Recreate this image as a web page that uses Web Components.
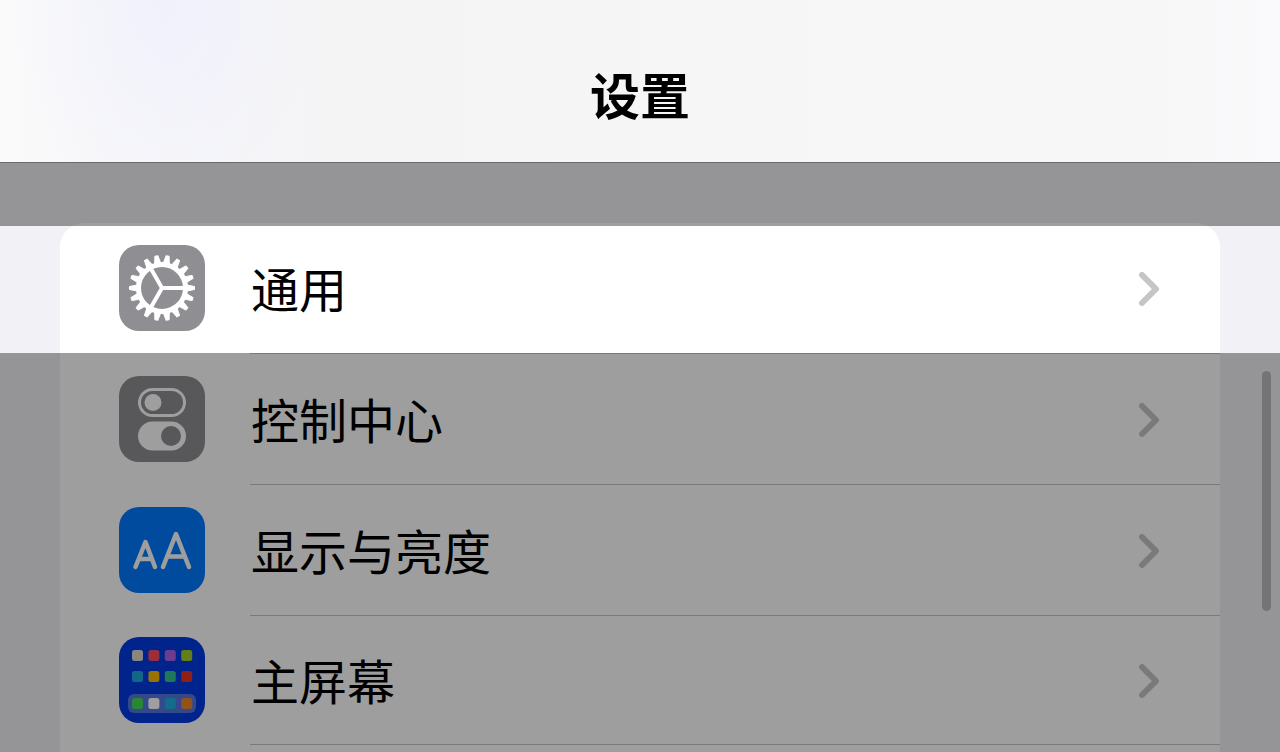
<!DOCTYPE html>
<html lang="zh-CN">
<head>
<meta charset="utf-8">
<title>设置</title>
<style>
html, body { margin: 0; min-height: 100%; }
body { background: #f1f1f6; font-family: "Noto Sans CJK SC", sans-serif; color: #000; overflow: hidden; }
</style>
</head>
<body>
<settings-screen heading="设置">
  <settings-row label="通用"><general-icon slot="icon"></general-icon></settings-row>
  <settings-row label="控制中心"><control-icon slot="icon"></control-icon></settings-row>
  <settings-row label="显示与亮度"><display-icon slot="icon"></display-icon></settings-row>
  <settings-row label="主屏幕"><home-icon slot="icon"></home-icon></settings-row>
</settings-screen>
<script>
class SettingsScreen extends HTMLElement {
  constructor() {
    super();
    this.attachShadow({ mode: 'open' }).innerHTML = `
      <style>
        :host { display: flex; flex-direction: column; height: 100vh; overflow: hidden; }
        header { position: relative; z-index: 2; flex: none; box-sizing: border-box; padding: 57px 0 33px; text-align: center;
          border-bottom: 1px solid #6b6b6b;
          background: radial-gradient(ellipse 150px 220px at 165px 0, #f0f1fc, rgba(241,241,252,0)), linear-gradient(90deg, #fafafb, #f5f5f8 18%, #f4f4f4 30%, #f7f7f7 70%, #f7f7f8 90%, #fafafc); }
        h1 { margin: 0; font-size: 50px; line-height: 72px; font-weight: 700; }
        main { position: relative; flex: 1; min-height: 0; padding: 60px 60px 0; background: #f1f1f6; }
        nav { background: #fff; border-radius: 24px 24px 0 0; min-height: 100%; }
        .spotlight { position: absolute; left: 0; right: 0; top: 63px; height: 127px; box-shadow: 0 0 0 200vmax rgba(0,0,0,.38); pointer-events: none; }
        .thumb { position: absolute; right: 9px; top: 208px; width: 9px; height: 240px; border-radius: 5px; background: #bcbcbe; }
      </style>
      <header><h1></h1></header>
      <main><nav><slot></slot></nav><div class="thumb"></div><div class="spotlight"></div></main>`;
    this.shadowRoot.querySelector('h1').textContent = this.getAttribute('heading');
  }
}
customElements.define('settings-screen', SettingsScreen);

class SettingsRow extends HTMLElement {
  constructor() {
    super();
    this.attachShadow({ mode: 'open' }).innerHTML = `
      <style>
        :host { display: block; }
        a { display: flex; align-items: stretch; height: 131px; padding-left: 59px; color: inherit; text-decoration: none; }
        .icon { display: flex; align-items: center; margin-right: 45px; padding-bottom: 2px; }
        .body { flex: 1; display: flex; align-items: center; justify-content: space-between; padding: 0 60px 2px 1px; border-bottom: 1px solid #c6c6c8; }
        .label { font-size: 48px; line-height: 72px; }
        svg { display: block; }
        :host(:last-of-type) a { height: 129px; }
      </style>
      <a href="#"><span class="icon"><slot name="icon"></slot></span>
        <span class="body"><span class="label"></span>
        <svg width="22" height="40" viewBox="0 0 22 40" aria-hidden="true"><path d="M4 8L18 22L4 36" fill="none" stroke="#c5c5c7" stroke-width="6" stroke-linecap="round" stroke-linejoin="round"/></svg></span></a>`;
    this.shadowRoot.querySelector('.label').textContent = this.getAttribute('label');
  }
}
customElements.define('settings-row', SettingsRow);

const defineIcon = (name, fill, art) => customElements.define(name, class extends HTMLElement {
  constructor() {
    super();
    this.attachShadow({ mode: 'open' }).innerHTML = `
      <style>:host { display: block; width: 86px; height: 86px; } svg { display: block; }</style>
      <svg width="86" height="86" viewBox="0 0 86 86" aria-hidden="true"><rect width="86" height="86" rx="20" fill="${fill}"/>${art}</svg>`;
  }
});

const teeth = Array.from({ length: 18 }, (_, i) =>
  `<path d="M-3 -25L-1.500 -32.500H1.500L3 -25Z" transform="translate(43 43) rotate(${10 + i * 20})"/>`).join('');
defineIcon('general-icon', '#8e8e93', `
  <g fill="#fff" stroke="#fff" stroke-width="1" stroke-linejoin="round">${teeth}</g>
  <circle cx="43" cy="43" r="23.500" fill="none" stroke="#fff" stroke-width="5"/>
  <path d="M43 43H67M43 43L31 22M43 43L31 64" stroke="#fff" stroke-width="4" fill="none"/>`);

defineIcon('control-icon', '#8e8e93', `
  <rect x="20.5" y="13.5" width="45" height="26" rx="13" fill="none" stroke="#fff" stroke-width="3"/>
  <circle cx="34" cy="26.5" r="8.5" fill="#fff"/>
  <rect x="19" y="45.500" width="48" height="29" rx="14.5" fill="#fff"/>
  <circle cx="52" cy="60" r="10" fill="#8e8e93"/>`);

defineIcon('display-icon', '#007aff', `
  <g fill="none" stroke="#fff" stroke-width="4.500" stroke-linecap="round" stroke-linejoin="round">
  <path d="M16.500 60L26.500 35L36 60M20 52H33"/><path d="M44 60L57 27L70 60M48 49.500H66"/></g>`);

const colors = ['#ddd9d0', '#fa4b62', '#af62e8', '#a0cf28', '#1ea5df', '#f7b80a', '#32c48c', '#e83328', '#43d956', '#fff', '#1eb0df', '#ef852c'];
defineIcon('home-icon', '#003ae0', `
  <rect x="9" y="57" width="68" height="19" rx="6" fill="#5577e0"/>` +
  colors.map((c, i) => `<rect x="${13 + (i % 4) * 16.4}" y="${[13, 34, 61][Math.floor(i / 4)]}" width="11" height="11" rx="2.500" fill="${c}"/>`).join(''));
</script>
</body>
</html>
